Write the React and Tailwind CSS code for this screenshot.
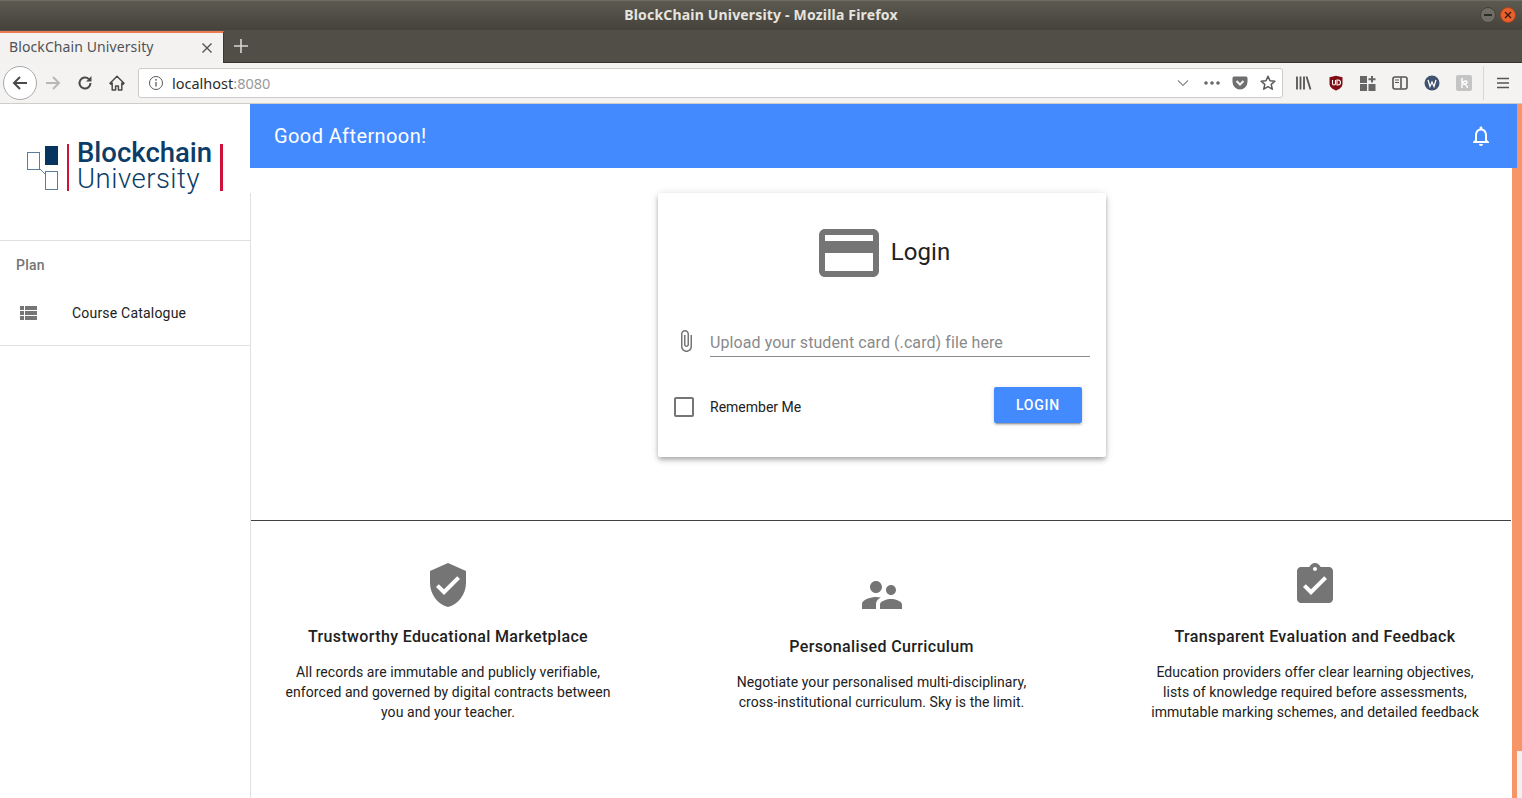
const Mi = ({ d, size = 24, className = "" }) => (
  <svg width={size} height={size} viewBox="0 0 24 24" fill="currentColor" className={"block shrink-0 " + className}><path d={d} /></svg>
);
const I = {
  card: "M20 4H4c-1.11 0-1.99.89-1.99 2L2 18c0 1.11.89 2 2 2h16c1.11 0 2-.89 2-2V6c0-1.11-.89-2-2-2zm0 14H4v-6h16v6zm0-10H4V6h16v2z",
  clip: "M16.5 6v11.5c0 2.21-1.79 4-4 4s-4-1.79-4-4V5c0-1.38 1.12-2.5 2.5-2.5s2.5 1.12 2.5 2.5v10.5c0 .55-.45 1-1 1s-1-.45-1-1V6H10v9.5c0 1.38 1.12 2.5 2.5 2.5s2.5-1.12 2.5-2.5V5c0-2.21-1.79-4-4-4S7 2.79 7 5v12.5c0 3.04 2.46 5.5 5.5 5.5s5.5-2.46 5.5-5.5V6h-1.5z",
  shield: "M12 1L3 5v6c0 5.55 3.84 10.74 9 12 5.16-1.26 9-6.45 9-12V5l-9-4zm-2 16l-4-4 1.41-1.41L10 14.17l6.59-6.59L18 9l-8 8z",
  people: "M16.5 12c1.38 0 2.49-1.12 2.49-2.5S17.88 7 16.5 7C15.12 7 14 8.12 14 9.5s1.12 2.5 2.5 2.5zM9 11c1.66 0 2.99-1.34 2.99-3S10.66 5 9 5C7.34 5 6 6.34 6 8s1.34 3 3 3zm7.5 3c-1.83 0-5.5.92-5.5 2.75V19h11v-2.25c0-1.83-3.67-2.75-5.5-2.75zM9 13c-2.33 0-7 1.17-7 3.5V19h7v-2.25c0-.85.33-2.34 2.37-3.47C10.5 13.1 9.66 13 9 13z",
  task: "M19 3h-4.18C14.4 1.84 13.3 1 12 1c-1.3 0-2.4.84-2.82 2H5c-1.1 0-2 .9-2 2v14c0 1.1.9 2 2 2h14c1.1 0 2-.9 2-2V5c0-1.1-.9-2-2-2zm-7 0c.55 0 1 .45 1 1s-.45 1-1 1-1-.45-1-1 .45-1 1-1zm-2 14l-4-4 1.41-1.41L10 14.17l6.59-6.59L18 9l-8 8z",
  list: "M4 14h4v-4H4v4zm0 5h4v-4H4v4zM4 9h4V5H4v4zm5 5h12v-4H9v4zm0 5h12v-4H9v4zM9 5v4h12V5H9z",
  bell: "M12 22c1.1 0 2-.9 2-2h-4c0 1.1.9 2 2 2zm6-6v-5c0-3.07-1.63-5.64-4.5-6.32V4c0-.83-.67-1.5-1.5-1.5s-1.5.67-1.5 1.5v.68C7.64 5.36 6 7.92 6 11v5l-2 2v1h16v-1l-2-2zm-2 1H8v-6c0-2.48 1.51-4.5 4-4.5s4 2.02 4 4.5v6z",
};

const Fx = ({ w = 16, h = 16, children, className = "" }) => (
  <svg width={w} height={h} viewBox={`0 0 ${w} ${h}`} className={"block shrink-0 " + className}>{children}</svg>
);

function Chrome() {
  return (
    <div className="font-['Noto_Sans',sans-serif]">
      <div className="relative h-[30px] flex items-center justify-center bg-gradient-to-b from-[#5d5a52] to-[#45423b] border-t border-[#6e6b63]">
        <span className="text-[14px] font-bold text-[#e6e4df] leading-none -mt-[1px] tracking-[0.18px]">BlockChain University - Mozilla Firefox</span>
        <div className="absolute right-[6px] top-[6px] flex gap-[4px]">
          <div className="w-[16px] h-[16px] rounded-full bg-[#6f6c65] border border-[#44413b] flex items-center justify-center"><div className="w-[8px] h-[1.5px] bg-[#2e2c28]" /></div>
          <div className="w-[16px] h-[16px] rounded-full bg-[#e8602c] border border-[#a8431c] flex items-center justify-center">
            <Fx w={8} h={8}><path d="M1 1l6 6M7 1l-6 6" stroke="#3a1a0c" strokeWidth="1.4" /></Fx>
          </div>
        </div>
      </div>
      <div className="h-[33px] flex bg-[#514e47] border-b border-[#35332e]">
        <div className="w-[224px] h-[32px] mt-[1px] bg-[#f3f2f0] border-t-2 border-[#ee7b50] flex items-center justify-between pl-[9px] pr-[10px] border-r border-r-[#3a3833]">
          <span className="text-[14px] text-[#4f5258] leading-none -mt-[3px] tracking-[0.1px]">BlockChain University</span>
          <Fx w={12} h={12}><path d="M1.5 1.5l9 9M10.5 1.5l-9 9" stroke="#55534e" strokeWidth="1.4" /></Fx>
        </div>
        <div className="w-[34px] flex items-center justify-center">
          <Fx w={14} h={14}><path d="M7 0v14M0 7h14" stroke="#d8d6d1" strokeWidth="1.6" /></Fx>
        </div>
      </div>
      <div className="h-[41px] bg-[#f4f3f1] border-b border-[#cfcdca] flex items-center pl-[3px] text-[#4a4a4a]">
        <div className="w-[34px] h-[34px] rounded-full bg-white border border-[#a9a9a9] flex items-center justify-center">
          <Fx><path d="M15 8H2M8 2L2 8l6 6" fill="none" stroke="#4a4a4a" strokeWidth="2" /></Fx>
        </div>
        <div className="w-[32px] flex justify-center">
          <Fx><path d="M1 8h13M8 2l6 6-6 6" fill="none" stroke="#b8b8b8" strokeWidth="2" /></Fx>
        </div>
        <div className="w-[32px] flex justify-center">
          <Fx><path d="M13.5 8a5.5 5.5 0 1 1-1.6-3.9" fill="none" stroke="#4a4a4a" strokeWidth="2" /><path d="M14.5 1v5.5H9z" fill="#4a4a4a" /></Fx>
        </div>
        <div className="w-[32px] flex justify-center">
          <Fx><path d="M8 1.300L1 8.200l1 1 1.200-1.100V15h3.400v-4h2.800v4h3.400V8.100L14 9.200l1-1z" fill="none" stroke="#4a4a4a" strokeWidth="1.500" strokeLinejoin="round" /></Fx>
        </div>
        <div className="ml-[5px] w-[1145px] h-[30px] bg-white border border-[#cccccc] rounded-[3px] flex items-center pl-[9px] pr-[6px]">
          <Fx><circle cx="8" cy="8" r="6.500" fill="none" stroke="#5a5a5a" strokeWidth="1" /><path d="M8 7v4.500" stroke="#5a5a5a" strokeWidth="1.300" /><circle cx="8" cy="4.800" r="0.900" fill="#5a5a5a" /></Fx>
          <span className="ml-[8px] text-[14.5px] text-[#2b2b2b] leading-none">localhost<span className="text-[#9a9a9a]">:8080</span></span>
          <div className="ml-auto flex items-center">
            <Fx w={12} h={8}><path d="M1 1.500l5 5 5-5" fill="none" stroke="#8a8a8a" strokeWidth="1.200" /></Fx>
            <Fx w={16} h={4} className="ml-[15px]"><circle cx="2" cy="2" r="1.800" fill="#666" /><circle cx="8" cy="2" r="1.800" fill="#666" /><circle cx="14" cy="2" r="1.800" fill="#666" /></Fx>
            <Fx className="ml-[12px]"><path d="M2 1.500h12a1.500 1.500 0 0 1 1.500 1.500v4a7.500 7.500 0 0 1-15 0V3A1.500 1.500 0 0 1 2 1.500z" fill="#6e6e6e" /><path d="M4.500 6L8 9.500 11.500 6" fill="none" stroke="#f4f3f1" strokeWidth="2" /></Fx>
            <Fx className="ml-[12px]"><path d="M8 1.200l2 4.500 4.900.5-3.700 3.200 1.100 4.800L8 11.700l-4.300 2.500 1.100-4.800L1.100 6.200 6 5.700z" fill="none" stroke="#5a5a5a" strokeWidth="1.500" strokeLinejoin="round" /></Fx>
          </div>
        </div>
        <div className="flex items-center ml-[13px]">
          <Fx><path d="M1 1.500v13M4.500 1.500v13M8 1.500v13M10.500 1.500l4 13" stroke="#555" strokeWidth="1.800" fill="none" /></Fx>
          <Fx className="ml-[16px]"><path d="M8 .8l6.500 1.500v6.200c0 3.500-3 5.800-6.500 6.900-3.500-1.100-6.500-3.400-6.500-6.900V2.300z" fill="#7f0e14" /><path d="M4.500 5v3.500a1.500 1.500 0 0 0 3 0V5M9 5v5h1a2.500 2.500 0 0 0 0-5z" fill="none" stroke="#fff" strokeWidth="1.100" /></Fx>
          <Fx className="ml-[16px]"><path d="M0 1h7v7H0zM0 9h7v7H0zM8.500 9h7v7h-7z" fill="#666" /><path d="M12 1v6.500M8.500 4.200h7" stroke="#666" strokeWidth="2" /></Fx>
          <Fx className="ml-[16px]"><rect x="1" y="2" width="14" height="12" rx="2" fill="none" stroke="#555" strokeWidth="1.600" /><path d="M9 2.500v11" stroke="#555" strokeWidth="1.600" /><path d="M3 5h4M3 7.500h4" stroke="#555" strokeWidth="1" /></Fx>
          <Fx className="ml-[16px]"><circle cx="8" cy="8" r="7.500" fill="#41526e" /><path d="M4 5l2 6.500L8 7l2 4.500L12 5" fill="none" stroke="#fff" strokeWidth="1.300" /></Fx>
          <div className="ml-[16px] w-[16px] h-[16px] rounded-[2px] bg-[#c4c4c4] flex items-center justify-center">
            <Fx w={10} h={12}><path d="M3 1v10M3 6c2-2 5-3 5-1S5 7 4 7c2 0 4 1 4.500 4" fill="none" stroke="#fff" strokeWidth="1.400" /></Fx>
          </div>
          <div className="ml-[11px] w-px h-[34px] bg-[#d8d7d4]" />
          <Fx className="ml-[12px]" w={14} h={12}><path d="M1 1.500h12M1 6h12M1 10.500h12" stroke="#555" strokeWidth="1.600" /></Fx>
        </div>
      </div>
    </div>
  );
}

function Logo() {
  return (
    <div className="flex items-start pt-[40px] pl-[27px] h-[137px] border-b border-[#e0e0e0]">
      <svg width="36" height="47" viewBox="0 0 36 47" className="block shrink-0">
        <rect x="0.500" y="8.500" width="12" height="17" fill="#fff" stroke="#5b7c9c" />
        <rect x="18" y="2" width="13" height="19" fill="#05345f" />
        <rect x="18.500" y="27.500" width="12" height="18" fill="#fff" stroke="#5b7c9c" />
        <path d="M12 24l6 6" stroke="#5b7c9c" />
      </svg>
      <div className="w-[2px] h-[47px] bg-[#d0123a] ml-[4px]" />
      <div className="ml-[8px] w-[143px] font-['Roboto',sans-serif] text-[#0c3d68] -mt-[5px]">
        <div className="text-[27.500px] font-medium leading-[27px]">Blockchain</div>
        <div className="text-[27.500px] font-light leading-[27px] -mt-[1px] tracking-[0.5px]">University</div>
      </div>
      <div className="w-[3px] h-[47px] bg-[#d0123a]" />
    </div>
  );
}

function Feature({ icon, title, lines }) {
  return (
    <div className="w-[360px] flex flex-col items-center text-center">
      <Mi d={icon} size={48} className="text-[#757575]" />
      <h3 className="mt-[16px] text-[16px] leading-[24px] font-medium text-[#212121] tracking-[0.37px]">{title}</h3>
      <p className="mt-[13px] text-[14px] leading-[20px] text-[#212121] tracking-[0.07px]">
        {lines.map((l, i) => <span key={i} className="block">{l}</span>)}
      </p>
    </div>
  );
}

export default function App() {
  return (
    <div className="w-[1522px] h-[798px] overflow-hidden flex flex-col bg-white font-['Roboto',sans-serif]">
      <Chrome />
      <div className="flex-1 flex min-h-0">
        <aside className="w-[250px] shrink-0">
          <Logo />
          <div className="border-b border-[#e0e0e0] pb-[8px]">
            <div className="h-[48px] pl-[16px] flex items-center text-[14px] font-medium text-[#757575] tracking-[0.25px]">Plan</div>
            <div className="h-[48px] pl-[16px] flex items-center">
              <Mi d={I.list} className="text-[#757575]" />
              <span className="ml-[32px] text-[14px] text-[#212121] tracking-[0.2px]">Course Catalogue</span>
            </div>
          </div>
        </aside>
        <div className="flex-1 flex flex-col min-w-0">
          <header className="h-[64px] shrink-0 bg-[#448aff] flex items-center justify-between pl-[24px] pr-[24px] text-white">
            <span className="text-[20px] tracking-[0.4px]">Good Afternoon!</span>
            <Mi d={I.bell} />
          </header>
          <div className="flex-1 flex min-h-0">
            <div className="flex-1 pt-[25px] flex flex-col min-w-0">
              <div className="flex-1 border-l border-[#e0e0e0]">
                <div className="h-[328px] border-b border-[#424242] pl-[407px] mr-[1px]">
                  <div className="w-[448px] h-[264px] rounded-[2px] bg-white shadow-[0_2px_4px_-1px_rgba(0,0,0,0.2),0_4px_5px_0_rgba(0,0,0,0.14),0_1px_10px_0_rgba(0,0,0,0.12)] pt-[24px]">
                    <div className="flex items-center justify-center gap-[6px] h-[72px] -ml-[1px]">
                      <Mi d={I.card} size={72} className="text-[#757575]" />
                      <span className="text-[24px] text-[#212121] mb-[2px] tracking-[0.1px]">Login</span>
                    </div>
                    <div className="flex items-start mt-[40px] pl-[16px] pr-[16px]">
                      <Mi d={I.clip} className="text-[#757575]" />
                      <div className="ml-[12px] flex-1 h-[28px] pt-[2px] border-b border-[#8a8a8a] text-[16px] leading-[24px] text-[#8a8a8a] tracking-[0.08px]">Upload your student card (.card) file here</div>
                    </div>
                    <div className="flex items-start mt-[30px] pl-[16px] pr-[24px]">
                      <div className="w-[20px] h-[20px] mt-[10px] border-2 border-[#757575] rounded-[2px]" />
                      <span className="ml-[16px] mt-[10px] text-[14px] leading-[20px] text-[#212121]">Remember Me</span>
                      <button className="ml-auto w-[88px] h-[36px] rounded-[2px] bg-[#448aff] text-white text-[14px] font-medium tracking-[0.8px] shadow-[0_3px_1px_-2px_rgba(0,0,0,0.2),0_2px_2px_0_rgba(0,0,0,0.14),0_1px_5px_0_rgba(0,0,0,0.12)]">LOGIN</button>
                    </div>
                  </div>
                </div>
                <div className="h-[241px] px-[17px] flex justify-between items-center">
                  <Feature icon={I.shield} title="Trustworthy Educational Marketplace" lines={["All records are immutable and publicly verifiable,", "enforced and governed by digital contracts between", "you and your teacher."]} />
                  <Feature icon={I.people} title="Personalised Curriculum" lines={["Negotiate your personalised multi-disciplinary,", "cross-institutional curriculum. Sky is the limit."]} />
                  <Feature icon={I.task} title="Transparent Evaluation and Feedback" lines={["Education providers offer clear learning objectives,", "lists of knowledge required before assessments,", "immutable marking schemes, and detailed feedback"]} />
                </div>
              </div>
            </div>
            <div className="w-[5px] shrink-0 bg-[#f79468]" />
          </div>
        </div>
        <div className="w-[5px] shrink-0 flex flex-col bg-[#f79468]">
          <div className="mt-auto h-[47px] bg-[#f2f1ef]" />
        </div>
      </div>
    </div>
  );
}
